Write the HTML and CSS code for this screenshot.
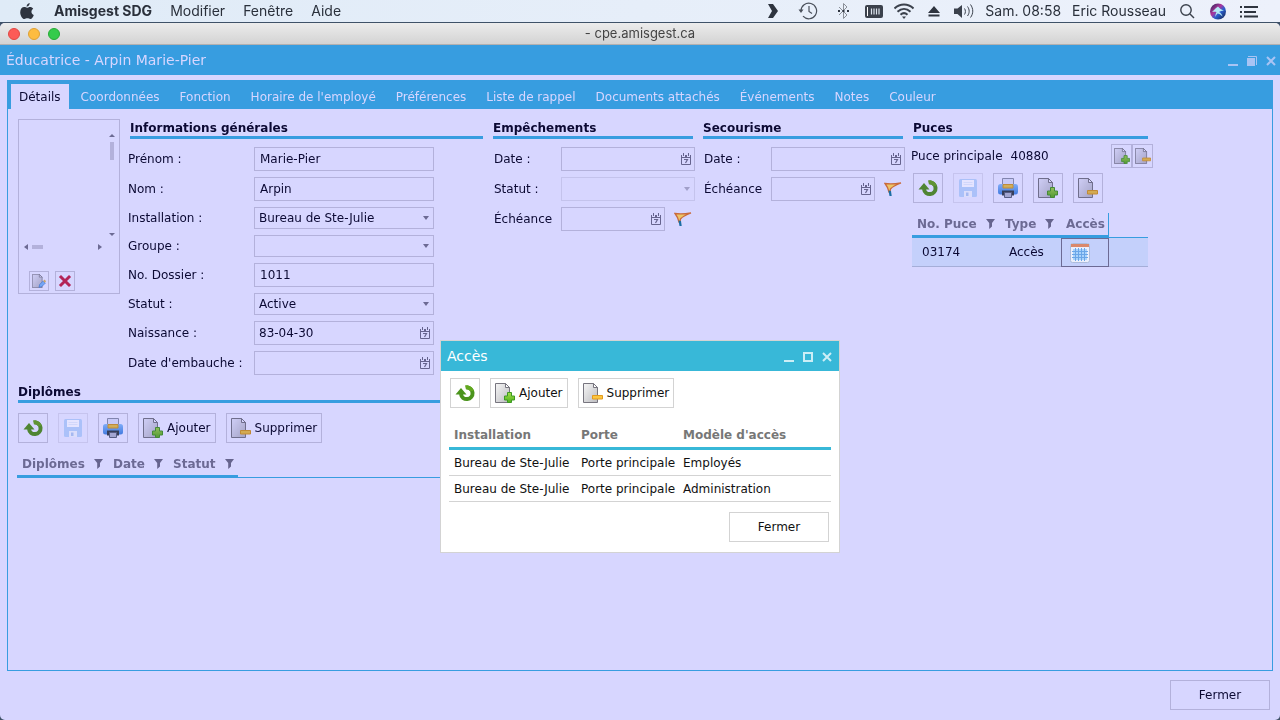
FILE: index.html
```html
<!DOCTYPE html>
<html lang="fr">
<head>
<meta charset="utf-8">
<meta name="viewport" content="width=device-width, initial-scale=1">
<title>- cpe.amisgest.ca</title>
<link rel="stylesheet" href="styles.css">
</head>
<body>
<svg class="sprite" aria-hidden="true">
  <defs>
    <linearGradient id="paper" x1="0" y1="0" x2="1" y2="1"><stop offset="0" stop-color="#f6f6f6"/><stop offset="1" stop-color="#bcbcc0"/></linearGradient>
    <linearGradient id="leaf" x1="0" y1="0" x2="0" y2="1"><stop offset="0" stop-color="#a4e04a"/><stop offset="1" stop-color="#4fb01c"/></linearGradient>
    <linearGradient id="sky" x1="0" y1="0" x2="0" y2="1"><stop offset="0" stop-color="#8cc8f8"/><stop offset="1" stop-color="#3a86dc"/></linearGradient>
    <linearGradient id="siri" x1="0" y1="0" x2="1" y2="1"><stop offset="0" stop-color="#1c2250"/><stop offset=".4" stop-color="#b0359c"/><stop offset=".6" stop-color="#2a5fd0"/><stop offset="1" stop-color="#141d38"/></linearGradient>
  </defs>
  <symbol id="i-doc" viewBox="0 0 20 20"><path d="M.5.5h10l4 4v15H.5z" fill="url(#paper)" stroke="#77757f"/><path d="M10.500.5v4h4z" fill="#fff" stroke="#77757f"/></symbol>
  <symbol id="i-add" viewBox="0 0 20 20"><use href="#i-doc"/><path d="M12.500 9.500h4v3.500h3v4h-3v2.500h-4V17h-3v-4h3z" fill="url(#leaf)" stroke="#3c9a22"/></symbol>
  <symbol id="i-remove" viewBox="0 0 20 20"><use href="#i-doc"/><path d="M9.500 12.500h10v3.500h-10z" fill="#fbc640" stroke="#e39a1c"/></symbol>
  <symbol id="i-edit" viewBox="0 0 20 20"><use href="#i-doc"/><path d="M10 19l1-4 5-5 3 3-5 5z" fill="#7cc0f4" stroke="#3a7fd0"/><path d="M16 10l2-2 2 2.500-1.500 2z" fill="#f3bd58"/></symbol>
  <symbol id="i-refresh" viewBox="0 0 20 20"><path d="M11.500 4.500A5.800 5.800 0 1 1 6 11" fill="none" stroke="#4b941c" stroke-width="4"/><path d="M.5 11.500L6 5l5.500 6.500z" fill="#4b941c"/><path d="M10 2.500c4-.8 7.500 1.500 8.800 5.500h-4c-.8-1.500-2-2.200-3.800-1.500z" fill="#62a81e"/></symbol>
  <symbol id="i-save" viewBox="0 0 20 20"><rect x="1" y="1" width="18" height="18" rx="1.500" fill="#5b9cf0"/><path d="M4 2h12v7H4z" fill="#fff"/><path d="M5.500 4.500h9M5.500 6.500h9" stroke="#c6dbf5"/><path d="M6 13h8v6H6z" fill="#e5ecf5"/><path d="M8 14.500h2.500v3.500H8z" fill="#4a83d8"/></symbol>
  <symbol id="i-print" viewBox="0 0 20 20"><path d="M4.500.5h11v7h-11z" fill="#edf0f6" stroke="#8e93a5"/><rect y="6" width="20" height="10.500" rx="2.500" fill="url(#sky)"/><path d="M5 6.500h10v3.500H5z" fill="#f8cb48" stroke="#e09c25"/><path d="M4 12.500h12v5H4z" fill="#2b3447"/><path d="M6.500 14.500h7v5h-7z" fill="#b9bfcc" stroke="#555e75"/></symbol>
  <symbol id="i-delete" viewBox="0 0 14 14"><path d="M3 3l8 8m0-8l-8 8" stroke="#d01444" stroke-width="3" stroke-linecap="square"/></symbol>
  <symbol id="i-cal" viewBox="0 0 10 12"><path d="M.5 2v9.500h9V2M0 4.500h10M2.500 0v3M7.500 0v3M4.500 2v2M5.500 2v2" fill="none" stroke="#66648e"/><path d="M3 6.500h3.500L4.500 10" fill="none" stroke="#66648e" stroke-width="1.200"/></symbol>
  <symbol id="i-filter" viewBox="0 0 9 11"><path d="M0 1h9L6 5v3.500L3.200 11V5z" fill="#66648e"/></symbol>
  <symbol id="i-flag" viewBox="0 0 18 14"><path d="M1 1.500c5 .8 11 .3 16-.5-4 1.500-8 3-10.500 6L6 10H5C4.200 6.500 3 4 1 1.500z" fill="#ecc566" stroke="#c96a3c" stroke-width="1.300"/><path d="M4.500 8.500l2.500.5.700 5H5.500z" fill="#1c6fa4"/></symbol>
  <symbol id="i-grid" viewBox="0 0 20 20"><rect x=".5" y=".5" width="19" height="19" rx="2" fill="#f2f5fc" stroke="#a9b9d6"/><rect x="1" y="1" width="18" height="3" fill="#df7c52"/><path d="M3 6h14v11H3z" fill="#a5d4fb"/><path d="M2 8.500h16M2 11.500h16M2 14.500h16M5.500 5v13M8.500 5v13M11.500 5v13M14.500 5v13" stroke="#5b9fe4"/></symbol>
</svg>

<header class="menubar">
  <svg class="apple" viewBox="0 0 14 17"><path d="M9.700 0c.1 1.800-1.300 3.600-3.100 3.700C6.400 2 8 .2 9.700 0zM7 4.800c.9 0 1.700-.8 3-.8 1.300 0 2.500.7 3.200 1.700-2.600 1.600-2.200 5.200.6 6.300C13.100 14 11.900 16 10.400 16c-1.200 0-1.600-.7-3-.7s-1.900.7-3 .7C2.300 16 .2 12.500.2 9.200.2 6 2.200 4.100 4.200 4.100c1.200 0 2.100.7 2.800.7z" fill="#2e343f"/></svg>
  <nav class="menus" aria-label="Barre des menus">
    <button class="menu menu-app">Amisgest SDG</button>
    <button class="menu">Modifier</button>
    <button class="menu">Fenêtre</button>
    <button class="menu">Aide</button>
  </nav>
  <div class="status">
    <div class="status-apps">
      <svg viewBox="0 0 20 20"><path d="M5 3h5l5 7-5 7H5l4-7z" fill="#2e343f"/></svg>
      <svg viewBox="0 0 20 20" fill="none" stroke="#4a505b" stroke-width="1.200"><path d="M3 10a7.800 7.800 0 1 1 2 5.200M11 5v5.500l3 2"/><path d="M.5 8.500h5L3 12z" fill="#4a505b" stroke="none"/></svg>
      <svg viewBox="0 0 20 20" fill="none" stroke="#8a8f98"><path d="M6 6l8 8-3.500 3.500v-15L14 6l-8 8"/><path d="M5 10h2M9.500 10h2M14 10h2" stroke="#2e343f" stroke-width="2"/></svg>
    </div>
    <div class="status-system">
      <svg viewBox="0 0 20 20"><rect x="1" y="4" width="18" height="13" rx="2" fill="#3b414c"/><path d="M3.500 6v9" stroke="#fff"/><path d="M7.500 7.500v6M10 7.500v6M12.500 7.500v6M15 7.500v6" stroke="#dde4ee" stroke-width="1.200"/></svg>
      <svg viewBox="0 0 20 20" fill="none" stroke="#3b414c" stroke-width="2"><path d="M.5 7.500c5.500-5.300 13.500-5.300 19 0M3.500 10.700c4-3.600 9-3.600 13 0M6.500 13.700c2.200-2 4.800-2 7 0"/><path d="M8 15.500h4l-2 2.500z" fill="#3b414c" stroke="none"/></svg>
      <svg viewBox="0 0 20 20"><path d="M10 5l6 7H4zM4.500 13.500h11v2h-11z" fill="#2e343f"/></svg>
      <svg viewBox="0 0 20 20" fill="none" stroke="#3b414c"><path d="M0 7.500h3.500L8 4v13l-4.500-4H0z" fill="#3b414c" stroke="none"/><path d="M10.500 7.500c1.200 1.700 1.200 4.300 0 6M13.500 5.500c2.200 3 2.200 6.500 0 9.500M16.500 3.500c3 4.300 3 9 0 13"/></svg>
    </div>
    <span>Sam. 08:58</span>
    <span>Eric Rousseau</span>
    <svg viewBox="0 0 20 20" fill="none" stroke="#3b414c" stroke-width="1.400"><circle cx="9" cy="9" r="5.200"/><path d="M13 13l4 4"/></svg>
    <svg viewBox="0 0 20 20"><circle cx="10" cy="10.500" r="8" fill="url(#siri)"/><path d="M4 11c3-3 5-5 6-5.500 1 1.500 3 3 6 4-2 .5-4 .5-5 1.500 2 1 3 2.500 3.500 4.500-2-2-3.500-3-5-3-1 1-1.500 2-2 3.500-.2-2 .2-3.500 1-5-1.500-.3-3-.3-4.500 0z" fill="#b4eaf5"/></svg>
    <svg viewBox="0 0 20 20" stroke="#2e343f" stroke-width="2"><path d="M1 6h2M5 6h14M1 11h2M5 11h12M1 15.500h2M5 15.500h14"/></svg>
  </div>
</header>

<main class="window">
  <div class="titlebar">
    <div class="lights"><i class="light red"></i><i class="light amber"></i><i class="light green"></i></div>
    <span class="titlebar-text">- cpe.amisgest.ca</span>
  </div>

  <div class="app-header">
    <h1>Éducatrice - Arpin Marie-Pier</h1>
    <div class="win-controls">
      <button aria-label="Réduire"><svg viewBox="0 0 10 10"><path d="M0 9h10" stroke="currentColor" stroke-width="2"/></svg></button>
      <button aria-label="Restaurer"><svg viewBox="0 0 10 10"><path d="M0 2h8v8H0z" fill="currentColor"/><path d="M1 .5h8.500V9" fill="none" stroke="currentColor"/></svg></button>
      <button aria-label="Fermer"><svg viewBox="0 0 10 10"><path d="M1 1l8 8m0-8L1 9" stroke="currentColor" stroke-width="2"/></svg></button>
    </div>
  </div>

  <section class="panel">
    <div class="tabs" role="tablist">
      <button class="tab active" role="tab" aria-selected="true">Détails</button>
      <button class="tab" role="tab">Coordonnées</button>
      <button class="tab" role="tab">Fonction</button>
      <button class="tab" role="tab">Horaire de l'employé</button>
      <button class="tab" role="tab">Préférences</button>
      <button class="tab" role="tab">Liste de rappel</button>
      <button class="tab" role="tab">Documents attachés</button>
      <button class="tab" role="tab">Événements</button>
      <button class="tab" role="tab">Notes</button>
      <button class="tab" role="tab">Couleur</button>
    </div>

    <div class="details">
      <div class="main-col">
        <div class="identity">
          <div class="photo">
            <div class="photo-view">
              <div class="vscroll"><i class="arrow up"></i><i class="thumb"></i><i class="arrow down"></i></div>
              <div class="hscroll"><i class="arrow left"></i><i class="thumb"></i><i class="arrow right"></i></div>
            </div>
            <div class="photo-actions">
              <button class="mini" aria-label="Modifier la photo"><svg><use href="#i-edit"/></svg></button>
              <button class="mini" aria-label="Supprimer la photo"><svg><use href="#i-delete"/></svg></button>
            </div>
          </div>
          <section class="info">
            <h2>Informations générales</h2>
            <div class="form form-info">
              <label for="prenom">Prénom :</label>
              <div class="field"><input id="prenom" value="Marie-Pier"></div>
              <label for="nom">Nom :</label>
              <div class="field"><input id="nom" value="Arpin"></div>
              <label for="installation">Installation :</label>
              <div class="field pick"><select id="installation"><option>Bureau de Ste-Julie</option></select></div>
              <label for="groupe">Groupe :</label>
              <div class="field pick"><select id="groupe"><option></option></select></div>
              <label for="dossier">No. Dossier :</label>
              <div class="field"><input id="dossier" value="1011"></div>
              <label for="statut">Statut :</label>
              <div class="field pick"><select id="statut"><option>Active</option></select></div>
              <label for="naissance">Naissance :</label>
              <div class="field date"><input id="naissance" value="83-04-30"><button aria-label="Calendrier"><svg><use href="#i-cal"/></svg></button></div>
              <label for="embauche">Date d'embauche :</label>
              <div class="field date"><input id="embauche"><button aria-label="Calendrier"><svg><use href="#i-cal"/></svg></button></div>
            </div>
          </section>
        </div>

        <section class="diplomas">
          <h2>Diplômes</h2>
          <div class="toolbar">
            <button class="tool" aria-label="Rafraîchir"><svg><use href="#i-refresh"/></svg></button>
            <button class="tool" aria-label="Enregistrer" disabled><svg><use href="#i-save"/></svg></button>
            <button class="tool" aria-label="Imprimer"><svg><use href="#i-print"/></svg></button>
            <button class="tool"><svg><use href="#i-add"/></svg>Ajouter</button>
            <button class="tool"><svg><use href="#i-remove"/></svg>Supprimer</button>
          </div>
          <table class="grid grid-diplomas">
            <thead><tr>
              <th class="c-dip">Diplômes<svg><use href="#i-filter"/></svg></th>
              <th class="c-date">Date<svg><use href="#i-filter"/></svg></th>
              <th class="c-stat">Statut<svg><use href="#i-filter"/></svg></th>
              <td class="filler"></td>
            </tr></thead>
          </table>
        </section>
      </div>

      <section class="side">
        <h2>Empêchements</h2>
        <div class="form form-side">
          <label for="emp-date">Date :</label>
          <div class="field date"><input id="emp-date"><button aria-label="Calendrier"><svg><use href="#i-cal"/></svg></button></div>
          <label for="emp-statut">Statut :</label>
          <div class="field pick tall off"><select id="emp-statut" disabled><option></option></select></div>
          <label for="emp-echeance">Échéance</label>
          <div class="due"><div class="field date"><input id="emp-echeance"><button aria-label="Calendrier"><svg><use href="#i-cal"/></svg></button></div><svg class="flag"><use href="#i-flag"/></svg></div>
        </div>
      </section>

      <section class="side">
        <h2>Secourisme</h2>
        <div class="form form-side">
          <label for="sec-date">Date :</label>
          <div class="field date"><input id="sec-date"><button aria-label="Calendrier"><svg><use href="#i-cal"/></svg></button></div>
          <label for="sec-echeance">Échéance</label>
          <div class="due"><div class="field date"><input id="sec-echeance"><button aria-label="Calendrier"><svg><use href="#i-cal"/></svg></button></div><svg class="flag"><use href="#i-flag"/></svg></div>
        </div>
      </section>

      <section class="chips">
        <h2>Puces</h2>
        <div class="chip-main">
          <span class="chip-label">Puce principale</span><span>40880</span>
          <div class="chip-actions">
            <button class="small" aria-label="Ajouter"><svg><use href="#i-add"/></svg></button><button class="small" aria-label="Supprimer"><svg><use href="#i-remove"/></svg></button>
          </div>
        </div>
        <div class="toolbar">
          <button class="tool" aria-label="Rafraîchir"><svg><use href="#i-refresh"/></svg></button>
          <button class="tool" aria-label="Enregistrer" disabled><svg><use href="#i-save"/></svg></button>
          <button class="tool" aria-label="Imprimer"><svg><use href="#i-print"/></svg></button>
          <button class="tool" aria-label="Ajouter"><svg><use href="#i-add"/></svg></button>
          <button class="tool" aria-label="Supprimer"><svg><use href="#i-remove"/></svg></button>
        </div>
        <table class="grid grid-chips">
          <thead><tr>
            <th class="c-no">No. Puce<svg><use href="#i-filter"/></svg></th>
            <th class="c-type">Type<svg><use href="#i-filter"/></svg></th>
            <th class="c-acc">Accès</th>
            <td class="filler"></td>
          </tr></thead>
          <tbody><tr>
            <td>03174</td><td>Accès</td>
            <td class="focus"><button aria-label="Voir les accès"><svg><use href="#i-grid"/></svg></button></td>
            <td></td>
          </tr></tbody>
        </table>
      </section>
    </div>
  </section>

  <footer class="actions"><button class="wide">Fermer</button></footer>
</main>

<section class="dialog" role="dialog" aria-labelledby="dlg-title">
  <header class="dialog-head">
    <h2 id="dlg-title">Accès</h2>
    <div class="win-controls">
      <button aria-label="Réduire"><svg viewBox="0 0 10 10"><path d="M0 9h10" stroke="currentColor" stroke-width="2"/></svg></button>
      <button aria-label="Agrandir"><svg viewBox="0 0 10 10"><path d="M1 1h8v8H1z" fill="none" stroke="currentColor" stroke-width="2"/></svg></button>
      <button aria-label="Fermer la fenêtre"><svg viewBox="0 0 10 10"><path d="M1 1l8 8m0-8L1 9" stroke="currentColor" stroke-width="2"/></svg></button>
    </div>
  </header>
  <div class="dialog-body">
    <div class="toolbar">
      <button class="tool" aria-label="Rafraîchir"><svg><use href="#i-refresh"/></svg></button>
      <button class="tool"><svg><use href="#i-add"/></svg>Ajouter</button>
      <button class="tool"><svg><use href="#i-remove"/></svg>Supprimer</button>
    </div>
    <table class="access">
      <thead><tr><th class="a-inst">Installation</th><th class="a-door">Porte</th><th>Modèle d'accès</th></tr></thead>
      <tbody>
        <tr><td>Bureau de Ste-Julie</td><td>Porte principale</td><td>Employés</td></tr>
        <tr><td>Bureau de Ste-Julie</td><td>Porte principale</td><td>Administration</td></tr>
      </tbody>
    </table>
    <div class="dialog-foot"><button class="wide">Fermer</button></div>
  </div>
</section>
</body>
</html>
```
FILE: styles.css
```css
:root {
  --blue: #379de0;
  --bg: #d7d6ff;
  --ink: #0b0933;
  --line: #b3b1db;
  --muted: #6c6a94;
}
* { box-sizing: border-box; }
body {
  margin: 0;
  min-height: 100vh;
  display: flex;
  flex-direction: column;
  background: #3f5268;
  color: var(--ink);
  font: 12px/16px Verdana, "DejaVu Sans", sans-serif;
}
h1, h2 { margin: 0; }
button, input, select { font: inherit; color: inherit; }
button { background: none; border: 0; padding: 0; }
.sprite { position: absolute; width: 0; height: 0; }

/* System menu bar */
.menubar {
  display: flex;
  align-items: center;
  height: 22px;
  margin-bottom: 1px;
  padding: 0 21px 0 20px;
  background: linear-gradient(90deg, #dfebf7, #edf1fb);
  color: #2a303b;
  font: 14px/22px Inter, "Open Sans", sans-serif;
}
.apple { width: 14px; height: 17px; margin-right: 20px; }
.menus { display: flex; gap: 18px; }
.menu-app { font-weight: 700; }
.status { display: flex; align-items: center; gap: 11px; margin-left: auto; white-space: nowrap; }
.status svg { width: 20px; height: 20px; }
.status-apps, .status-system { display: flex; }
.status-apps { gap: 15px; }
.status-system { gap: 10px; }

/* Window frame */
.window {
  flex: 1;
  display: flex;
  flex-direction: column;
  background: var(--bg);
  border-radius: 5px;
  overflow: hidden;
}
.titlebar {
  display: grid;
  grid-template-columns: 1fr auto 1fr;
  align-items: center;
  height: 22px;
  background: linear-gradient(#ececec, #d3d3d3);
  border-bottom: 1px solid #b2b0b0;
  color: #444;
  font: 13px/21px Inter, "Open Sans", sans-serif;
}
.lights { display: flex; gap: 8px; padding-left: 8px; }
.light { width: 12px; height: 12px; border-radius: 50%; border: 1px solid; }
.red { background: #fc5b57; border-color: #e04843; }
.amber { background: #fdbc40; border-color: #dea034; }
.green { background: #35cb4b; border-color: #27aa35; }
.app-header {
  display: flex;
  align-items: center;
  justify-content: space-between;
  height: 30px;
  padding: 0 4px 0 6px;
  background: var(--blue);
  color: var(--bg);
}
.app-header h1 { font-size: 14px; font-weight: 400; }
.win-controls { display: flex; gap: 9px; color: #a9c4f4; padding-top: 2px; }
.win-controls button, .win-controls svg { display: block; width: 10px; height: 10px; }

/* Tabs and panel */
.panel { flex: 1; margin: 5px 7px 0; border: 1px solid var(--blue); }
.tabs { display: flex; gap: 4px; padding: 3px 3px 0; background: var(--blue); }
.tab { height: 25px; padding: 0 8px; color: var(--bg); white-space: nowrap; }
.tab.active { background: var(--bg); color: var(--ink); }
.details { display: flex; gap: 10px; padding: 10px; }
.details h2 {
  padding-top: 1px;
  font-size: 12px;
  line-height: 16px;
  font-weight: 700;
  border-bottom: 3px solid var(--blue);
}
.main-col { flex: 0 0 465px; }
.identity { display: flex; gap: 8px; align-items: flex-start; }
.photo { width: 102px; height: 175px; border: 1px solid var(--line); display: flex; flex-direction: column; }
.photo-view {
  flex: 1;
  display: grid;
  grid-template: 1fr 16px / 1fr 15px;
  padding: 12px 0 0 5px;
}
.vscroll, .hscroll { display: flex; align-items: center; gap: 4px; }
.vscroll { grid-area: 1 / 2; flex-direction: column; gap: 5px; }
.hscroll { grid-area: 2 / 1; }
.arrow { border: 3px solid transparent; }
.up { border-top: 0; border-bottom-color: var(--muted); margin-top: 2px; }
.down { border-bottom: 0; border-top-color: var(--muted); margin-top: auto; margin-bottom: 3px; }
.left { border-left: 0; border-right: 4px solid var(--muted); }
.right { border-right: 0; border-left: 4px solid var(--muted); margin-left: auto; margin-right: 2px; }
.thumb { background: var(--line); }
.vscroll .thumb { width: 4px; height: 18px; }
.hscroll .thumb { width: 11px; height: 4px; }
.photo-actions { display: flex; gap: 6px; padding: 16px 10px 2px; }
.mini { display: grid; place-items: center; width: 20px; height: 20px; border: 1px solid var(--line); }
.mini svg { width: 14px; height: 14px; }

/* Forms */
.info { flex: 1; }
.info h2 { margin-left: 2px; }
.form { display: grid; align-items: center; row-gap: 6px; padding-top: 8px; }
.form label { white-space: nowrap; }
.form-info { grid-template-columns: 126px 180px; }
.form-side { grid-template-columns: 68px 134px; }
.form-side label { padding-left: 1px; }
.field { display: flex; height: 24px; border: 1px solid var(--line); }
.field input, .field select {
  flex: 1;
  min-width: 0;
  width: 100%;
  border: 0;
  padding: 0 5px;
  background: transparent;
  outline: 0;
}
.field.date input, .pick select { padding-left: 4px; }
.date button { display: grid; place-items: center; width: 16px; }
.date svg { width: 10px; height: 12px; }
.pick { display: grid; align-items: center; height: 22px; }
.pick.tall { height: 24px; }
.pick select, .pick::after { grid-area: 1 / 1; }
.pick select { appearance: none; height: 100%; }
.pick::after {
  content: "";
  justify-self: end;
  margin-right: 4px;
  border: 3px solid transparent;
  border-top: 4px solid var(--muted);
  border-bottom: 0;
  pointer-events: none;
}
.pick.off { opacity: .5; }
.due { display: flex; align-items: center; gap: 9px; }
.due .field { width: 104px; }
.flag { width: 18px; height: 14px; }
.side { flex: 0 0 200px; min-width: 0; }

/* Toolbars */
.toolbar { display: flex; gap: 10px; }
.tool {
  display: flex;
  align-items: center;
  gap: 4px;
  height: 30px;
  padding: 0 4px;
  border: 1px solid var(--line);
  white-space: nowrap;
}
.tool svg { width: 20px; height: 20px; }
.window .tool svg, .small svg, .mini svg { opacity: .9; mix-blend-mode: multiply; }
.tool:disabled { border-color: #c6c4ee; }
.window .tool:disabled svg { opacity: .35; mix-blend-mode: normal; }
.diplomas { padding-top: 8px; }
.diplomas .toolbar { padding-top: 10px; }

/* Data grids */
.grid { border-collapse: separate; border-spacing: 0; table-layout: fixed; }
.grid th {
  height: 25px;
  padding: 0 0 0 5px;
  border-bottom: 3px solid var(--blue);
  color: var(--muted);
  text-align: left;
  white-space: nowrap;
}
.grid th svg { width: 9px; height: 11px; margin-left: 9px; vertical-align: -1px; }
.grid .filler { border-bottom: 1px solid var(--blue); }
.grid-diplomas { width: 466px; margin: 10px 0 0 -1px; }
.c-dip { width: 91px; }
.c-date { width: 60px; }
.c-stat { width: 70px; }

/* Chips column */
.chips { flex: 0 0 234px; }
.chip-main { display: flex; align-items: center; gap: 8px; margin: 5px -5px 0 -2px; white-space: nowrap; }
.chip-actions { display: flex; margin-left: auto; }
.small { display: grid; place-items: center; width: 21px; height: 24px; border: 1px solid var(--line); }
.small svg { width: 16px; height: 16px; }
.chips .toolbar { padding-top: 5px; }
.grid-chips { width: 236px; margin: 10px 0 0 -1px; }
.c-no { width: 88px; }
.c-type { width: 61px; }
.grid .c-acc { width: 48px; border-right: 1px solid var(--blue); }
.grid tbody td {
  height: 29px;
  padding: 0 0 0 10px;
  background: #c4d0fb;
  border-bottom: 1px solid #a5aed8;
}
.grid tbody td:nth-child(2) { padding-left: 9px; }
.grid tbody .focus { border: 1px solid var(--muted); padding: 0 8px; }
.focus button { display: block; }
.focus svg { display: block; width: 20px; height: 20px; opacity: .85; }

.actions { display: flex; justify-content: flex-end; padding: 9px 10px 10px; }
.wide { width: 100px; height: 30px; border: 1px solid var(--line); }

/* Floating access dialog */
.dialog {
  position: absolute;
  left: 440px;
  top: 340px;
  width: 400px;
  background: #fff;
  border: 1px solid #d3d3d3;
  color: #111;
  --line: #d3d3d3;
}
.dialog-head {
  display: flex;
  align-items: center;
  justify-content: space-between;
  height: 30px;
  padding: 0 7px 0 6px;
  background: #38b8d8;
  color: #fff;
}
.dialog-head h2 { font-size: 14px; font-weight: 400; }
.dialog-head .win-controls { color: #cceef6; }
.dialog-body { padding: 7px 8px 10px; }
.dialog-body .toolbar { padding-left: 1px; }
.access { width: 100%; margin-top: 15px; border-collapse: separate; border-spacing: 0; table-layout: fixed; }
.access th, .access td { padding: 0 0 0 5px; text-align: left; white-space: nowrap; }
.access th { height: 27px; border-bottom: 3px solid #38b8d8; color: #777; }
.access td { height: 26px; border-bottom: 1px solid #d3d3d3; }
.a-inst { width: 127px; }
.a-door { width: 102px; }
.dialog-foot { display: flex; justify-content: flex-end; padding: 10px 2px 0 0; }
```
